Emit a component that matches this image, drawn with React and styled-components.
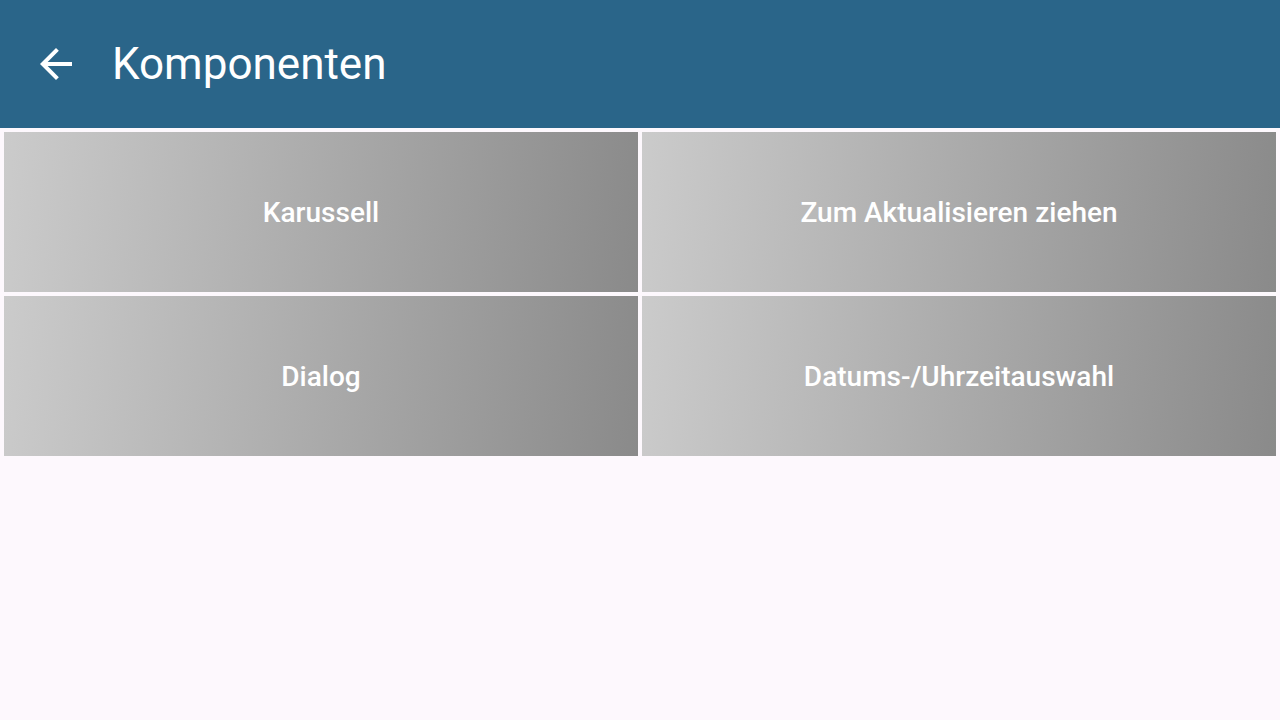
import React from 'react';
import styled, { createGlobalStyle } from 'styled-components';

const GlobalStyle = createGlobalStyle`
  html, body {
    margin: 0;
    padding: 0;
    background: #fdf8fd;
    font-family: Roboto, "Noto Sans", sans-serif;
  }
`;

const Page = styled.div`
  width: 1280px;
  height: 720px;
  background: #fdf8fd;
`;

const Header = styled.header`
  height: 128px;
  background: #2a6589;
  display: flex;
  align-items: center;
  padding-left: 32px;
  box-sizing: border-box;
  color: #fff;
`;

const BackButton = styled.button`
  width: 48px;
  height: 48px;
  padding: 0;
  border: none;
  background: none;
  display: flex;
  align-items: center;
  justify-content: center;
  margin-right: 32px;
  cursor: pointer;
`;

const Title = styled.h1`
  margin: 0;
  font-size: 44px;
  font-weight: 400;
  color: #fff;
`;

const Grid = styled.div`
  display: grid;
  grid-template-columns: 1fr 1fr;
  grid-auto-rows: 160px;
  gap: 4px;
  padding: 4px;
`;

const Tile = styled.div`
  background: linear-gradient(95deg, #cbcbcb 0%, #8a8a8a 100%);
  display: flex;
  align-items: center;
  justify-content: center;
  color: #fff;
  font-size: 28px;
  font-weight: 500;
  cursor: pointer;
`;

const items = ['Karussell', 'Zum Aktualisieren ziehen', 'Dialog', 'Datums-/Uhrzeitauswahl'];

export default function App() {
  return (
    <Page>
      <GlobalStyle />
      <Header>
        <BackButton>
          <svg width="48" height="48" viewBox="0 0 24 24" fill="#fff">
            <path d="M20 11H7.83l5.59-5.59L12 4l-8 8 8 8 1.41-1.41L7.83 13H20v-2z" />
          </svg>
        </BackButton>
        <Title>Komponenten</Title>
      </Header>
      <Grid>
        {items.map((label) => (
          <Tile key={label}>{label}</Tile>
        ))}
      </Grid>
    </Page>
  );
}
